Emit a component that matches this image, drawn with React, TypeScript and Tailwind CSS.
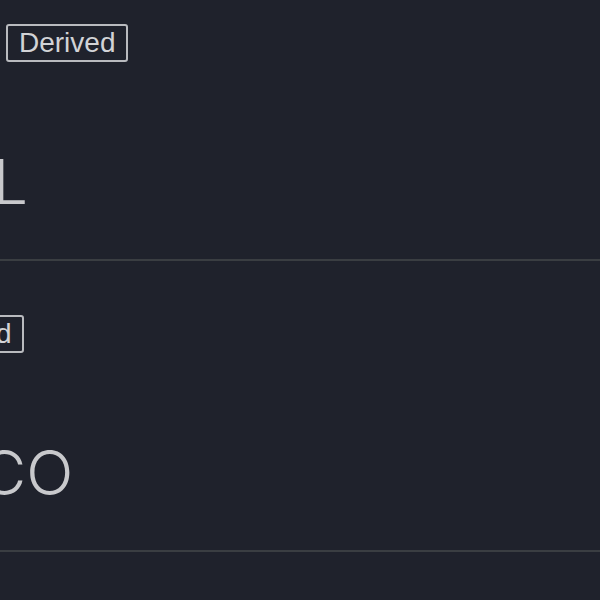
const ROWS = [
  { badgeOffset: "ml-[6px]", text: "L", textOffset: "ml-[-7px]" },
  { badgeOffset: "ml-[-98px]", text: "CO", textOffset: "ml-[-19px]" },
  { badgeOffset: "ml-[6px]", text: "", textOffset: "ml-0" },
];

function Badge({ className }: { className: string }) {
  return (
    <span
      className={`inline-flex h-[38px] shrink-0 items-center rounded-[3px] border-2 border-[#b9bbbf] px-[11px] text-[28px] leading-none text-[#d2d3d6] ${className}`}
    >
      Derived
    </span>
  );
}

export default function App() {
  return (
    <div
      className="h-[600px] w-[600px] overflow-hidden bg-[#1f222c]"
      style={{ fontFamily: '"Liberation Sans", Arial, sans-serif' }}
    >
      <div className="-mt-[30px] flex flex-col">
        {ROWS.map((row, i) => (
          <div
            key={i}
            className="flex h-[291px] flex-col border-b-2 border-[#3a3e42] pt-[54px]"
          >
            <div className="flex">
              <Badge className={row.badgeOffset} />
            </div>
            <div
              className={`mt-[89px] whitespace-nowrap text-[62px] leading-none text-[#c8c9cc] ${row.textOffset}`}
              style={{ fontFamily: '"Inter", "Liberation Sans", sans-serif', fontWeight: 300 }}
            >
              {row.text}
            </div>
          </div>
        ))}
      </div>
    </div>
  );
}
